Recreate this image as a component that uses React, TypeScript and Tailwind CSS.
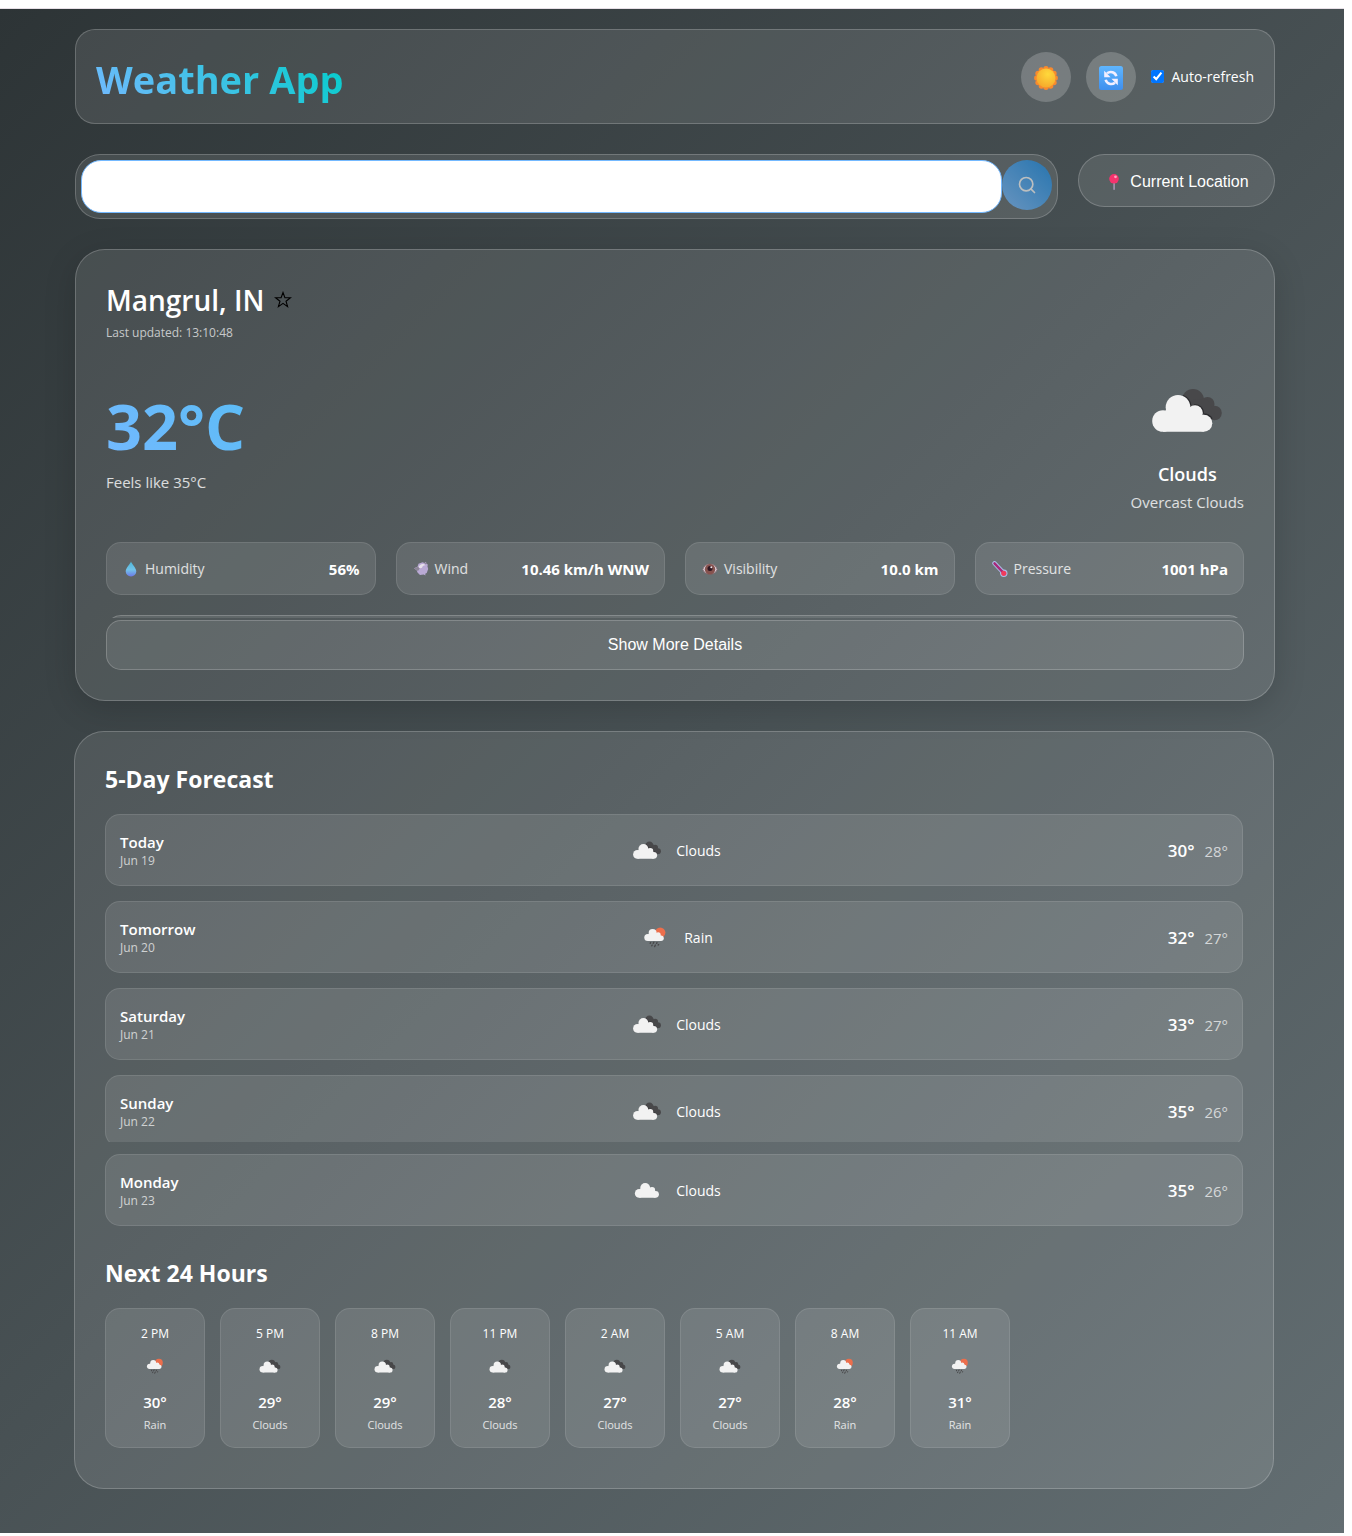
import React from "react";
import { Search } from "lucide-react";

type Kind = "overcast" | "cloud" | "rain";

function CloudShape({ fill = "#f2f2f2" }: { fill?: string }) {
  return (
    <g fill={fill}>
      <circle cx="26" cy="61" r="10.8" />
      <circle cx="41" cy="47.3" r="12.3" />
      <circle cx="58" cy="53" r="7.8" />
      <circle cx="66.8" cy="63.3" r="8.5" />
      <path d="M26 71.8h40.800V55H58L50 46H32l-6 8z" />
    </g>
  );
}

function WeatherIcon({ kind, className }: { kind: Kind; className: string }) {
  return (
    <svg viewBox="0 0 100 100" className={className} aria-hidden="true">
      {kind === "overcast" && (
        <>
          <g fill="#48484a">
            <circle cx="56" cy="40" r="11" />
            <circle cx="70.5" cy="44" r="7" />
            <circle cx="77.5" cy="53" r="7.3" />
            <path d="M56 40l14-1 8 14-7 6H56z" />
          </g>
          <g fill="none" stroke="#2b2b2e" strokeWidth="1.4">
            <path d="M46 35.6a12.6 12.6 0 0 1 7.8 10" />
            <path d="M57 45a8.2 8.2 0 0 1 9.3 8.6" />
            <path d="M67 54.2a9 9 0 0 1 8 4.400" />
          </g>
          <CloudShape />
        </>
      )}
      {kind === "cloud" && (
        <g transform="translate(4.5 -2.5)">
          <CloudShape />
        </g>
      )}
      {kind === "rain" && (
        <>
          <circle cx="63" cy="39" r="13" fill="#ec6e4c" />
          <g transform="translate(10.9 1.6) scale(.81)">
            <CloudShape />
          </g>
          <g stroke="#48484a" strokeWidth="3.4" strokeLinecap="round">
            <path d="M39 64l-1 2M47 63l-1.500 3M55 64l-1 2M43 70l-1 2M51 70l-2 4M59 69l-1 1" />
          </g>
        </>
      )}
    </svg>
  );
}

function SunIcon() {
  const petals = Array.from({ length: 12 }, (_, i) => {
    const a = (i * Math.PI) / 6;
    return <circle key={i} cx={12 + 9.2 * Math.cos(a)} cy={12 + 9.2 * Math.sin(a)} r="2.7" />;
  });
  return (
    <svg viewBox="0 0 24 24" className="size-6" aria-hidden="true">
      <defs>
        <radialGradient id="sun" cx=".6" cy=".3" r=".8">
          <stop offset="0" stopColor="#ffd93b" />
          <stop offset="1" stopColor="#f5a52a" />
        </radialGradient>
      </defs>
      <g fill="#f88a2e">{petals}</g>
      <circle cx="12" cy="12" r="9.500" fill="url(#sun)" />
    </svg>
  );
}

function RefreshIcon() {
  return (
    <svg viewBox="0 0 24 24" className="size-6" aria-hidden="true">
      <defs>
        <linearGradient id="refresh" x1="0" y1="0" x2="0" y2="1">
          <stop offset="0" stopColor="#5fb6ff" />
          <stop offset="1" stopColor="#3f8fee" />
        </linearGradient>
      </defs>
      <rect width="24" height="24" rx="2.500" fill="url(#refresh)" />
      <g fill="none" stroke="#f3efff" strokeWidth="2.600">
        <path d="M8 7.300c3.500-2.600 8.300-1 9.300 3" />
        <path d="M16 16.700c-3.500 2.600-8.300 1-9.300-3" />
      </g>
      <path fill="#f3efff" d="M5.200 4.800v6.400h6.400zM18.800 19.200v-6.400h-6.400z" />
    </svg>
  );
}

function PinIcon() {
  return (
    <svg viewBox="0 0 16 16" className="size-4" aria-hidden="true">
      <rect x="7.200" y="8" width="1.800" height="8" rx=".8" fill="#9a8fa8" />
      <circle cx="8" cy="4.800" r="4.800" fill="#f5336d" />
      <circle cx="9.500" cy="2.800" r="1.400" fill="#ffa3bd" />
    </svg>
  );
}

function DropIcon() {
  return (
    <svg viewBox="0 0 16 16" className="size-4" aria-hidden="true">
      <defs>
        <linearGradient id="drop" x1="0" y1="0" x2="0" y2="1">
          <stop offset="0" stopColor="#4db8d8" />
          <stop offset=".55" stopColor="#72c3ea" />
          <stop offset="1" stopColor="#6c78e6" />
        </linearGradient>
      </defs>
      <path d="M8 .5c.6 2.600 5.300 6.200 5.300 10A5.200 5.200 0 0 1 8 15.500a5.200 5.200 0 0 1-5.300-5C2.700 6.700 7.400 3.100 8 .5z" fill="url(#drop)" />
    </svg>
  );
}

function WindIcon() {
  return (
    <svg viewBox="0 0 16 16" className="size-4" aria-hidden="true">
      <path d="M1 7.300l3.500-1.500 1-3 4-1.500 2 .8 1.500-1.300.4 2 1.600 1-.6 1.200.8 3-1.500 4-1.500.8.300 1.700-1.800-.9-3.700.5-2.500-2.600-.7-2z" fill="#b9a9d4" />
      <path d="M5.500 6.500c1-4 5-4.500 7-2.300-2-.2-3 .8-3.500 2.500-1 .8-2 .5-3.500-.2z" fill="#e6e0ea" />
      <path d="M1 7.300l4-1.500 1.700 1.800L5 10zM11 2l2.200-.6-.2 2z" fill="#8b8495" />
    </svg>
  );
}

function EyeIcon() {
  return (
    <svg viewBox="0 0 16 16" className="size-4" aria-hidden="true">
      <path d="M.8 8.500C2.500 1.300 13.500 1.300 15.200 8.500 13.500 14.500 2.500 14.500 .8 8.500z" fill="#d7cfd8" stroke="#86656c" strokeWidth=".8" />
      <circle cx="8" cy="8.200" r="5.200" fill="#86524e" />
      <circle cx="8" cy="7.600" r="2.500" fill="#2d1722" />
      <circle cx="9.300" cy="6.200" r="1" fill="#efe3e8" />
    </svg>
  );
}

function ThermometerIcon() {
  return (
    <svg viewBox="0 0 16 16" className="size-4" aria-hidden="true">
      <g strokeLinecap="round">
        <path d="M2.500 2.300l9 9.500" stroke="#a9bfe9" strokeWidth="4.400" />
        <circle cx="11.800" cy="12.300" r="3.700" fill="#a9bfe9" />
        <path d="M2.500 2.300l9 9.500" stroke="#a82878" strokeWidth="2.400" />
        <circle cx="11.800" cy="12.300" r="2.600" fill="#f03b5d" />
      </g>
    </svg>
  );
}

const stats = [
  { label: "Humidity", value: "56%", icon: <DropIcon /> },
  { label: "Wind", value: "10.46 km/h WNW", icon: <WindIcon /> },
  { label: "Visibility", value: "10.0 km", icon: <EyeIcon /> },
  { label: "Pressure", value: "1001 hPa", icon: <ThermometerIcon /> },
];

interface Day {
  name: string;
  date: string;
  kind: Kind;
  text: string;
  high: number;
  low: number;
}

const days: Day[] = [
  { name: "Today", date: "Jun 19", kind: "overcast", text: "Clouds", high: 30, low: 28 },
  { name: "Tomorrow", date: "Jun 20", kind: "rain", text: "Rain", high: 32, low: 27 },
  { name: "Saturday", date: "Jun 21", kind: "overcast", text: "Clouds", high: 33, low: 27 },
  { name: "Sunday", date: "Jun 22", kind: "overcast", text: "Clouds", high: 35, low: 26 },
  { name: "Monday", date: "Jun 23", kind: "cloud", text: "Clouds", high: 35, low: 26 },
];

const hours: { time: string; kind: Kind; temp: number; text: string }[] = [
  { time: "2 PM", kind: "rain", temp: 30, text: "Rain" },
  { time: "5 PM", kind: "overcast", temp: 29, text: "Clouds" },
  { time: "8 PM", kind: "overcast", temp: 29, text: "Clouds" },
  { time: "11 PM", kind: "overcast", temp: 28, text: "Clouds" },
  { time: "2 AM", kind: "overcast", temp: 27, text: "Clouds" },
  { time: "5 AM", kind: "overcast", temp: 27, text: "Clouds" },
  { time: "8 AM", kind: "rain", temp: 28, text: "Rain" },
  { time: "11 AM", kind: "rain", temp: 31, text: "Rain" },
];

function DayRow({ day }: { day: Day }) {
  return (
    <div className="grid h-[72px] grid-cols-[1fr_auto_1fr] items-center rounded-[15px] border border-white/10 bg-white/10 px-[14px]">
      <div className="pt-0.5">
        <div className="text-[15px] leading-5 font-semibold">{day.name}</div>
        <div className="text-[12px] leading-[18px] text-white/70">{day.date}</div>
      </div>
      <div className="flex items-center gap-[9px]">
        <WeatherIcon kind={day.kind} className="size-10" />
        <span className="pt-0.5 text-[14px] leading-5">{day.text}</span>
      </div>
      <div className="flex items-center justify-end gap-[10px] pt-0.5">
        <span className="text-[17px] leading-6 font-semibold">{day.high}°</span>
        <span className="text-[15px] leading-6 text-white/70">{day.low}°</span>
      </div>
    </div>
  );
}

export default function App() {
  return (
    <div className="bg-white pr-2 font-['Open_Sans','Noto_Sans',sans-serif] text-white">
      <div className="h-[9px] border-b border-[#e6dfe6]" />
      <main className="bg-linear-[135deg] from-[#2d3436] to-[#636e72] pt-5 pb-11">
        <div className="pr-[69px] pl-[75px]">
          <header className="flex h-[95px] items-center justify-between rounded-[20px] border border-white/20 bg-white/10 px-5">
            <h1 className="bg-linear-[45deg] from-[#74b9ff] to-[#00cec9] bg-clip-text pt-1 text-[38px] leading-[52px] font-bold text-transparent">
              Weather App
            </h1>
            <div className="flex items-center gap-[15px]">
              <button type="button" aria-label="Toggle theme" className="flex size-[50px] items-center justify-center rounded-full bg-white/20 pt-0.5">
                <SunIcon />
              </button>
              <button type="button" aria-label="Refresh" className="flex size-[50px] items-center justify-center rounded-full bg-white/20 pt-0.5">
                <RefreshIcon />
              </button>
              <label className="flex items-center gap-2 text-[14px] leading-5">
                <input type="checkbox" defaultChecked className="size-[13px] accent-[#0075ff]" />
                Auto-refresh
              </label>
            </div>
          </header>

          <div className="mt-[30px] flex items-start gap-5">
            <form className="flex flex-1 items-start rounded-[25px] border border-white/20 bg-white/10 p-[5px]" onSubmit={(e) => e.preventDefault()}>
              <input type="text" aria-label="Search for a city" className="h-[53px] min-w-0 flex-1 rounded-[20px] border border-[#74b9ff] bg-white px-5 text-base text-black outline-none" />
              <button type="submit" aria-label="Search" className="flex size-[50px] items-center justify-center rounded-full bg-linear-[45deg] from-[#74b9ff] to-[#0984e3] opacity-60">
                <Search size={20} strokeWidth={2} />
              </button>
            </form>
            <button type="button" className="flex h-[53px] w-[197px] items-center justify-center gap-2 rounded-[27px] border border-white/20 bg-white/10 pt-0.5 pl-0.5 font-['Liberation_Sans',Arial,sans-serif] text-base">
              <PinIcon />
              Current Location
            </button>
          </div>

          <section className="mt-[30px] rounded-[30px] border border-white/20 bg-white/10 p-[30px] shadow-[0_8px_32px_rgba(0,0,0,0.15)]">
            <div className="flex h-10 items-center gap-[10px]">
              <h2 className="text-[28px] leading-10 font-semibold">Mangrul, IN</h2>
              <button type="button" aria-label="Add to favourites" className="text-black">
                <svg viewBox="0 0 18 18" className="size-[18px]" aria-hidden="true">
                  <path d="M9 1.500l1.900 5.300h5.600L12 10.200l1.600 5.500L9 12.400l-4.600 3.300L6 10.200 1.500 6.800h5.600z" fill="none" stroke="currentColor" strokeWidth="1.100" />
                </svg>
              </button>
            </div>
            <p className="mt-[3px] text-[12px] leading-5 text-white/70">Last updated: 13:10:48</p>

            <div className="mt-[17px] flex items-end justify-between">
              <div className="pb-5">
                <div className="bg-linear-[45deg] from-[#74b9ff] to-[#5bbcf5] bg-clip-text pb-1 text-[63px] leading-[76px] font-bold text-transparent">32°C</div>
                <div className="text-[15px] leading-7 text-white/80">Feels like 35°C</div>
              </div>
              <div className="flex flex-col items-center">
                <WeatherIcon kind="overcast" className="size-[100px]" />
                <div className="text-[18px] leading-7 font-semibold">Clouds</div>
                <div className="text-[15px] leading-7 text-white/80">Overcast Clouds</div>
              </div>
            </div>

            <dl className="mt-[26px] grid grid-cols-4 gap-5">
              {stats.map((s) => (
                <div key={s.label} className="flex h-[53px] items-center justify-between rounded-[15px] border border-white/10 bg-white/10 pr-[15px] pl-4">
                  <dt className="flex items-center gap-1.5 text-[14px] leading-5 text-white/80">
                    {s.icon}
                    {s.label}
                  </dt>
                  <dd className="text-[15px] leading-5 font-bold">{s.value}</dd>
                </div>
              ))}
            </dl>

            <div className="mt-5 h-[3px] overflow-hidden">
              <div className="h-[50px] rounded-[15px] border border-white/20 bg-white/10" />
            </div>
            <button type="button" className="mt-0.5 h-[50px] w-full rounded-[15px] border border-white/20 bg-white/10 font-['Liberation_Sans',Arial,sans-serif] text-base">
              Show More Details
            </button>
          </section>
        </div>

        <div className="mt-[30px] pr-[70px] pl-[74px]">
          <section className="rounded-[30px] border border-white/20 bg-white/10 px-[30px] pt-[30px] pb-10">
            <h2 className="text-[23px] leading-[34px] font-bold">5-Day Forecast</h2>
            <div className="mt-[18px] flex flex-col gap-[15px]">
              {days.slice(0, 3).map((d) => (
                <DayRow key={d.name} day={d} />
              ))}
              <div className="h-[67px] overflow-hidden">
                <DayRow day={days[3]} />
              </div>
            </div>
            <div className="mt-3">
              <DayRow day={days[4]} />
            </div>

            <h2 className="mt-[30px] text-[23px] leading-[34px] font-bold">Next 24 Hours</h2>
            <div className="mt-[18px] flex gap-[15px]">
              {hours.map((h) => (
                <div key={h.time} className="flex h-[140px] w-[100px] flex-col items-center rounded-[15px] border border-white/10 bg-white/10 pt-[15px]">
                  <div className="text-[12px] leading-5 font-medium">{h.time}</div>
                  <WeatherIcon kind={h.kind} className="mt-[7px] size-[30px]" />
                  <div className="mt-[9px] text-[15px] leading-6 font-semibold">{h.temp}°</div>
                  <div className="text-[11px] leading-[22px] text-white/80">{h.text}</div>
                </div>
              ))}
            </div>
          </section>
        </div>
      </main>
    </div>
  );
}
